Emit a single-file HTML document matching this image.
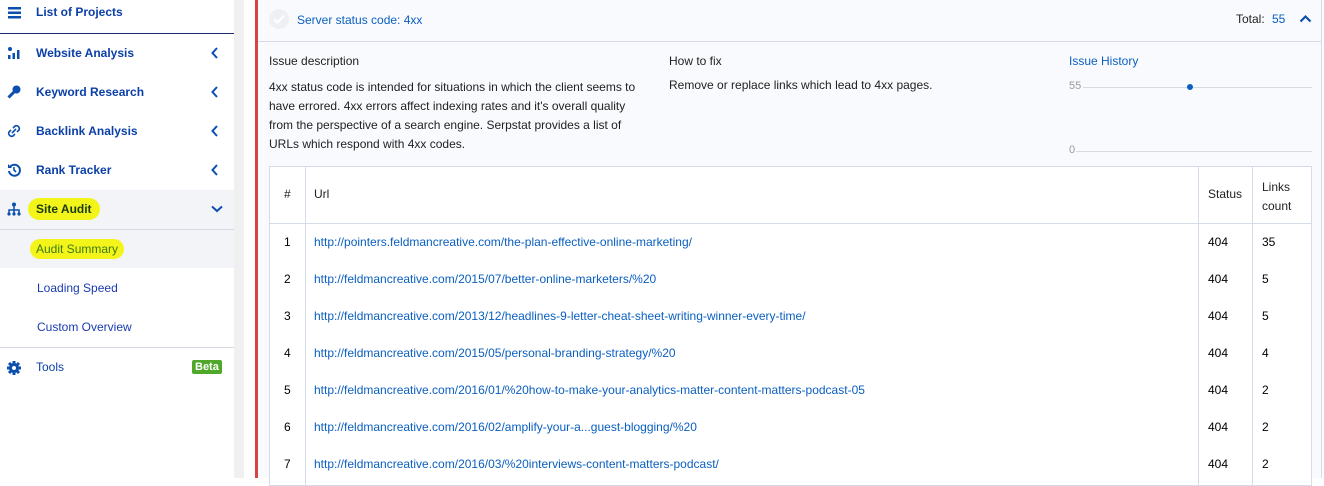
<!DOCTYPE html>
<html><head><meta charset="utf-8"><style>
*{margin:0;padding:0;box-sizing:border-box}
body{width:1324px;height:478px;overflow:hidden;font-family:"Liberation Sans",sans-serif;background:#fff;position:relative;font-size:12px}
.a{position:absolute}
.side{left:0;top:0;width:234px;height:478px;background:#fff}
.mi{position:absolute;left:0;width:234px;height:39px;color:#0b3fa8;font-weight:bold;font-size:12px}
.mi span{position:absolute;left:36px;top:12px}
.mi .ic{position:absolute;left:7px;top:12px;width:14px;height:14px}
.chev{position:absolute;left:211px;top:13px;width:8px;height:12px}
.sub{position:absolute;left:37px;font-size:12px;color:#1a3bb0}
.hl{background:#f5f6f8;color:#3d7a12;display:inline-block;border-radius:10px;background:#f3f51a;padding:2px 5px;margin-left:-5px}
.t{color:#222;font-size:12px}
a{color:#0a5fc0;text-decoration:none}
.row{position:absolute;left:269px;width:1042px;height:37px}
.row div{position:absolute;top:12px;font-size:12px}
</style></head><body>
<div class="a side">
  <svg class="a" style="left:8px;top:7px" width="14" height="12"><rect y="0" width="13" height="2.5" fill="#0b4fb0"/><rect y="4.5" width="13" height="2.5" fill="#0b4fb0"/><rect y="9" width="13" height="2.5" fill="#0b4fb0"/></svg>
  <div class="a" style="left:36px;top:5px;color:#0b3fa8;font-size:12px;font-weight:bold">List of Projects</div>
  <div class="a" style="left:0;top:33px;width:234px;height:1px;background:#1c2a6b"></div>
  <div class="mi" style="top:34px"><svg class="ic" viewBox="0 0 14 14"><circle cx="3" cy="3" r="2" fill="#0b4fb0"/><rect x="1" y="9" width="2.5" height="4" fill="#0b4fb0"/><rect x="5.5" y="7" width="2.5" height="6" fill="#0b4fb0"/><rect x="10" y="4" width="2.5" height="9" fill="#0b4fb0"/></svg><span>Website Analysis</span><svg class="chev"><path d="M6 1L1.5 6 6 11" stroke="#0b4fb0" stroke-width="2" fill="none"/></svg></div>
  <div class="mi" style="top:73px"><svg class="ic" viewBox="0 0 14 14"><circle cx="9.5" cy="4.5" r="4" fill="#0b4fb0"/><path d="M7 7L1.5 12.5" stroke="#0b4fb0" stroke-width="3"/></svg><span>Keyword Research</span><svg class="chev"><path d="M6 1L1.5 6 6 11" stroke="#0b4fb0" stroke-width="2" fill="none"/></svg></div>
  <div class="mi" style="top:112px"><svg class="ic" viewBox="0 0 14 14"><path d="M6 4l2-2a3 3 0 0 1 4 4l-2 2M8 10l-2 2a3 3 0 0 1-4-4l2-2M5 9l4-4" stroke="#0b4fb0" stroke-width="1.6" fill="none"/></svg><span>Backlink Analysis</span><svg class="chev"><path d="M6 1L1.5 6 6 11" stroke="#0b4fb0" stroke-width="2" fill="none"/></svg></div>
  <div class="mi" style="top:151px"><svg class="ic" viewBox="0 0 14 14"><path d="M3 4A5.5 5.5 0 1 1 2 8" stroke="#0b4fb0" stroke-width="2" fill="none"/><path d="M1 1v4h4z" fill="#0b4fb0"/><path d="M7 4v3l2 2" stroke="#0b4fb0" stroke-width="1.6" fill="none"/></svg><span>Rank Tracker</span><svg class="chev"><path d="M6 1L1.5 6 6 11" stroke="#0b4fb0" stroke-width="2" fill="none"/></svg></div>
  <div class="mi" style="top:190px;background:#f3f4f8"><svg class="ic" viewBox="0 0 14 14"><circle cx="7" cy="2.5" r="2" fill="#0b4fb0"/><path d="M7 4v4M2 12V8h10v4M7 8v4" stroke="#0b4fb0" stroke-width="1.5" fill="none"/><circle cx="2" cy="12" r="1.6" fill="#0b4fb0"/><circle cx="7" cy="12" r="1.6" fill="#0b4fb0"/><circle cx="12" cy="12" r="1.6" fill="#0b4fb0"/></svg><span style="left:28px;top:8px;background:#f3f51a;border-radius:12px;padding:4px 8px;color:#1a3a10">Site Audit</span><svg class="chev" style="left:211px;top:15px;width:12px;height:8px"><path d="M1 1.5l5 4.5 5-4.5" stroke="#0b4fb0" stroke-width="2" fill="none"/></svg></div>
  <div class="a" style="left:0;top:229px;width:234px;height:1px;background:#d5d9e3"></div>
  <div class="a" style="left:0;top:230px;width:234px;height:38px;background:#f3f4f8"></div>
  <div class="a" style="left:30px;top:239px;background:#f3f51a;border-radius:10px;padding:3px 6px;color:#3d7a12;font-size:12px">Audit Summary</div>
  <div class="sub" style="top:281px">Loading Speed</div>
  <div class="sub" style="top:320px">Custom Overview</div>
  <div class="a" style="left:0;top:347px;width:234px;height:1px;background:#d5d9e3"></div>
  <svg class="a" style="left:7px;top:361px" width="14" height="14" viewBox="0 0 14 14"><circle cx="7" cy="7" r="5" fill="#0b4fb0"/><g stroke="#0b4fb0" stroke-width="3"><path d="M7 0v14M0 7h14M2 2l10 10M12 2L2 12"/></g><circle cx="7" cy="7" r="2" fill="#fff"/></svg>
  <div class="a" style="left:36px;top:360px;color:#0b3fa8;font-size:12px">Tools</div>
  <div class="a" style="left:192px;top:360px;background:#4fa82a;color:#fff;font-size:11px;font-weight:bold;padding:1px 3px;border-radius:2px">Beta</div>
</div>
<div class="a" style="left:234px;top:0;width:10px;height:478px;background:#f0f0f0"></div>
<div class="a" style="left:244px;top:0;width:11px;height:478px;background:#fff"></div>
<div class="a" style="left:255px;top:0;width:3px;height:478px;background:#d64545"></div>
<div class="a" style="left:258px;top:0;width:1064px;height:478px;background:#f9fafd;border-right:1px solid #d5dbe8"></div>
<div class="a" style="left:269px;top:9px;width:20px;height:20px;border-radius:50%;background:#eef0f4"></div>
<svg class="a" style="left:273px;top:14px" width="12" height="10"><path d="M1 5l3.5 3.5L11 1.5" stroke="#fff" stroke-width="2" fill="none"/></svg>
<div class="a" style="left:297px;top:13px;color:#0a5fc0;font-size:12px">Server status code: 4xx</div>
<div class="a t" style="left:1236px;top:12px">Total:</div>
<div class="a" style="left:1272px;top:12px;color:#0a5fc0;font-size:12px">55</div>
<svg class="a" style="left:1299px;top:14px" width="13" height="9"><path d="M1.5 7.5L6.5 2.5l5 5" stroke="#0b4fb0" stroke-width="2.2" fill="none"/></svg>
<div class="a" style="left:258px;top:41px;width:1064px;height:1px;background:#d5dbe8"></div>
<div class="a t" style="left:269px;top:54px">Issue description</div>
<div class="a t" style="left:269px;top:78px;width:380px;line-height:19px">4xx status code is intended for situations in which the client seems to have errored. 4xx errors affect indexing rates and it's overall quality from the perspective of a search engine. Serpstat provides a list of URLs which respond with 4xx codes.</div>
<div class="a t" style="left:669px;top:54px">How to fix</div>
<div class="a t" style="left:669px;top:78px">Remove or replace links which lead to 4xx pages.</div>
<div class="a" style="left:1069px;top:54px;color:#0a5fc0;font-size:12px">Issue History</div>
<div class="a" style="left:1069px;top:80px;color:#999;font-size:11px">55</div>
<div class="a" style="left:1083px;top:87px;width:229px;height:1px;background:#d5dbe3"></div>
<div class="a" style="left:1187px;top:84px;width:6px;height:6px;border-radius:50%;background:#0a5fc0"></div>
<div class="a" style="left:1069px;top:144px;color:#999;font-size:11px">0</div>
<div class="a" style="left:1076px;top:151px;width:236px;height:1px;background:#d5dbe3"></div>
<div class="a" style="left:269px;top:166px;width:1043px;height:320px;background:#fff;border:1px solid #d5dbe8"></div>
<div class="a" style="left:305px;top:166px;width:1px;height:320px;background:#d5dbe8"></div>
<div class="a" style="left:1198px;top:166px;width:1px;height:320px;background:#d5dbe8"></div>
<div class="a" style="left:1252px;top:166px;width:1px;height:320px;background:#d5dbe8"></div>
<div class="a" style="left:269px;top:223px;width:1043px;height:1px;background:#d5dbe8"></div>
<div class="a t" style="left:284px;top:187px">#</div>
<div class="a t" style="left:314px;top:187px">Url</div>
<div class="a t" style="left:1208px;top:187px">Status</div>
<div class="a t" style="left:1262px;top:178px;line-height:19px">Links<br>count</div>
<div class="row" style="top:223px"><div style="left:15px">1</div><div style="left:45px"><a>http://pointers.feldmancreative.com/the-plan-effective-online-marketing/</a></div><div style="left:939px">404</div><div style="left:993px">35</div></div>
<div class="row" style="top:260px"><div style="left:15px">2</div><div style="left:45px"><a>http://feldmancreative.com/2015/07/better-online-marketers/%20</a></div><div style="left:939px">404</div><div style="left:993px">5</div></div>
<div class="row" style="top:297px"><div style="left:15px">3</div><div style="left:45px"><a>http://feldmancreative.com/2013/12/headlines-9-letter-cheat-sheet-writing-winner-every-time/</a></div><div style="left:939px">404</div><div style="left:993px">5</div></div>
<div class="row" style="top:334px"><div style="left:15px">4</div><div style="left:45px"><a>http://feldmancreative.com/2015/05/personal-branding-strategy/%20</a></div><div style="left:939px">404</div><div style="left:993px">4</div></div>
<div class="row" style="top:371px"><div style="left:15px">5</div><div style="left:45px"><a>http://feldmancreative.com/2016/01/%20how-to-make-your-analytics-matter-content-matters-podcast-05</a></div><div style="left:939px">404</div><div style="left:993px">2</div></div>
<div class="row" style="top:408px"><div style="left:15px">6</div><div style="left:45px"><a>http://feldmancreative.com/2016/02/amplify-your-a...guest-blogging/%20</a></div><div style="left:939px">404</div><div style="left:993px">2</div></div>
<div class="row" style="top:445px"><div style="left:15px">7</div><div style="left:45px"><a>http://feldmancreative.com/2016/03/%20interviews-content-matters-podcast/</a></div><div style="left:939px">404</div><div style="left:993px">2</div></div>
</body></html>
